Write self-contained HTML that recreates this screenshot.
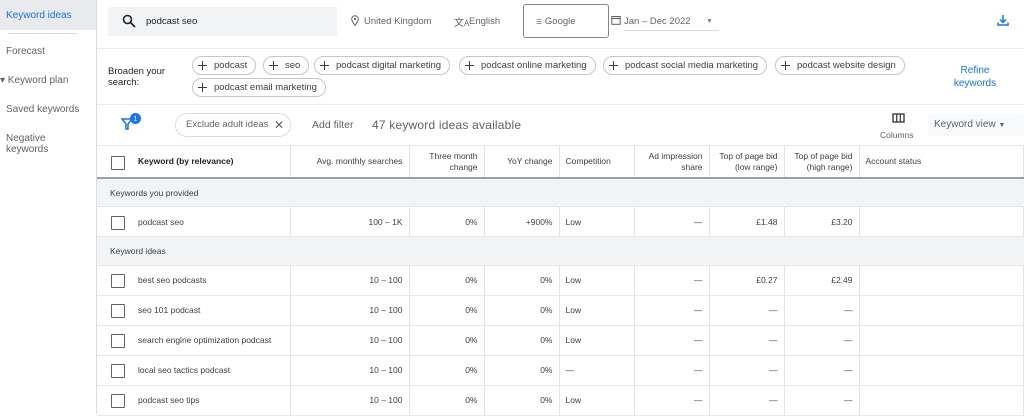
<!DOCTYPE html>
<html><head><meta charset="utf-8"><style>
*{box-sizing:border-box;margin:0;padding:0}
body{width:1024px;height:414px;overflow:hidden;background:#fff;font-family:"Liberation Sans",Arial,sans-serif;color:#3c4043;position:relative}
.a{position:absolute}
.side{left:0;top:0;width:97px;height:414px;border-right:1px solid #dadce0;background:#fff}
.side div{position:absolute;left:6px;font-size:10px;color:#5f6368}
.chip{position:absolute;height:19px;border:1px solid #c4c7c5;border-radius:10px;font-size:9.5px;color:#3c4043;line-height:17px;padding:0 8px 0 21px;white-space:nowrap}
.chip i{position:absolute;left:5px;top:4px;width:9px;height:9px}
.chip i:before{content:"";position:absolute;left:0;top:4px;width:9px;height:1.3px;background:#3c4043}
.chip i:after{content:"";position:absolute;left:4px;top:0;width:1.3px;height:9px;background:#3c4043}
table{position:absolute;left:97px;top:146px;border-collapse:collapse;table-layout:fixed;width:927px;font-size:8.5px;color:#3c4043}
td{border-right:1px solid #e3e3e3;border-bottom:1px solid #e8e8e8;height:30px;padding:0 6px;text-align:right;white-space:nowrap}
td:first-child{text-align:left;padding-left:41px;position:relative}
td:first-child:before{content:"";position:absolute;left:14px;top:50%;margin-top:-6px;width:12px;height:12px;border:1.5px solid #5f6368;border-radius:1px}
tr.h td{height:32px;border-bottom:2px solid #9aa0a6;line-height:11px}
tr.g td{background:#f1f3f4;border-right:none;height:28.5px;text-align:left;padding-left:13px}
tr.g td:before{display:none}
td.l{text-align:left}
</style></head><body>
<div class="a side">
<div style="left:0;top:0;width:96px;height:30px;background:#e8eaed"></div>
<div style="top:10px;color:#1a73e8;font-size:10px">Keyword ideas</div>
<div style="left:8px;top:33px;width:70px;height:1px;background:#dadce0"></div>
<div style="top:46px">Forecast</div>
<div style="top:75px;left:0">▾ Keyword plan</div>
<div style="top:104px">Saved keywords</div>
<div style="top:133px;line-height:11px">Negative<br>keywords</div>
</div>
<div class="a" style="left:108px;top:7px;width:229px;height:29px;background:#f1f3f4"></div>
<svg class="a" style="left:122px;top:14px" width="14" height="14" viewBox="0 0 14 14"><circle cx="5.5" cy="5.5" r="4" fill="none" stroke="#202124" stroke-width="1.6"/><path d="M8.5 8.5L13 13" stroke="#202124" stroke-width="1.8"/></svg>
<div class="a" style="left:146px;top:16px;font-size:9.5px;color:#202124">podcast seo</div>
<svg class="a" style="left:351px;top:15px" width="8" height="11" viewBox="0 0 8 11"><path d="M4 10.5C2 7.5 0.7 5.8 0.7 4A3.3 3.3 0 0 1 7.3 4C7.3 5.8 6 7.5 4 10.5Z" fill="none" stroke="#5f6368" stroke-width="1"/><circle cx="4" cy="4" r="1.1" fill="#5f6368"/></svg>
<div class="a" style="left:364px;top:16px;font-size:9.5px;color:#5f6368">United Kingdom</div>
<div class="a" style="left:454px;top:14px;font-size:10px;color:#5f6368">文<span style="font-size:8px">A</span></div>
<div class="a" style="left:469px;top:16px;font-size:9.5px;color:#5f6368">English</div>
<div class="a" style="left:523px;top:4px;width:86px;height:34px;border:1px solid #80868b;border-radius:3px"></div>
<div class="a" style="left:536px;top:16px;font-size:9.5px;color:#5f6368"><span style="font-size:7px">☰</span> Google</div>
<svg class="a" style="left:611px;top:15px" width="10" height="10" viewBox="0 0 10 10"><rect x="0.8" y="1.5" width="8.4" height="7.8" fill="none" stroke="#5f6368"/><path d="M0.8 3.5H9.2" stroke="#5f6368" stroke-width="1.2"/></svg>
<div class="a" style="left:624px;top:16px;font-size:9.5px;color:#5f6368">Jan – Dec 2022</div>
<div class="a" style="left:706px;top:18px;font-size:7px;color:#80868b">▼</div>
<div class="a" style="left:624px;top:30px;width:95px;height:1px;background:#dadce0"></div>
<svg class="a" style="left:997px;top:14px" width="12" height="12" viewBox="0 0 12 12"><path d="M6 1V8M3 5.5L6 8.5 9 5.5M1 8.5V11H11V8.5" fill="none" stroke="#1a73e8" stroke-width="1.5"/></svg>
<div class="a" style="left:97px;top:48px;width:927px;height:1px;background:#e8eaed"></div>
<div class="a" style="left:108px;top:66px;font-size:9.5px;color:#202124;line-height:11px">Broaden your<br>search:</div>
<div class="chip" style="left:192px;top:56px"><i></i>podcast</div>
<div class="chip" style="left:263px;top:56px"><i></i>seo</div>
<div class="chip" style="left:314px;top:56px"><i></i>podcast digital marketing</div>
<div class="chip" style="left:459px;top:56px"><i></i>podcast online marketing</div>
<div class="chip" style="left:603px;top:56px"><i></i>podcast social media marketing</div>
<div class="chip" style="left:775px;top:56px"><i></i>podcast website design</div>
<div class="chip" style="left:192px;top:78px"><i></i>podcast email marketing</div>
<div class="a" style="left:945px;top:64px;font-size:10px;color:#1a73e8;text-align:center;line-height:13px;width:60px">Refine<br>keywords</div>
<div class="a" style="left:97px;top:104px;width:927px;height:1px;background:#e8eaed"></div>
<svg class="a" style="left:121px;top:117px" width="12" height="13" viewBox="0 0 12 13"><path d="M1 2H11L7 7V12H5V7Z" fill="none" stroke="#1a73e8" stroke-width="1.5"/></svg>
<div class="a" style="left:130px;top:113px;width:11px;height:11px;border-radius:50%;background:#1a73e8;color:#fff;font-size:7.5px;text-align:center;line-height:11px">1</div>
<div class="a" style="left:175px;top:113px;width:116px;height:24px;border:1px solid #dadce0;border-radius:12px;font-size:9.5px;color:#5f6368;line-height:22px;padding-left:10px">Exclude adult ideas <span style="position:absolute;left:98px;font-size:12px;color:#5f6368">✕</span></div>
<div class="a" style="left:312px;top:119px;font-size:10.5px;color:#5f6368">Add filter</div>
<div class="a" style="left:372px;top:118px;font-size:12px;color:#5f6368;letter-spacing:0.2px">47 keyword ideas available</div>
<svg class="a" style="left:892px;top:113px" width="13" height="10" viewBox="0 0 13 10"><rect x="1" y="1" width="11" height="8" fill="none" stroke="#3c4043" stroke-width="1.4"/><path d="M4.7 1V9M8.3 1V9" stroke="#3c4043" stroke-width="1.3"/></svg>
<div class="a" style="left:880px;top:130px;font-size:8.5px;color:#5f6368">Columns</div>
<div class="a" style="left:928px;top:114px;width:96px;height:22px;background:#f8f9fa;border-radius:3px;font-size:10px;color:#5f6368;line-height:22px;padding-left:6px">Keyword view <span style="font-size:7px">▼</span></div>
<div class="a" style="left:97px;top:145px;width:927px;height:1px;background:#e8eaed"></div>
<table>
<colgroup><col style="width:193px"><col style="width:119px"><col style="width:75px"><col style="width:75px"><col style="width:75px"><col style="width:75px"><col style="width:75px"><col style="width:75px"><col></colgroup>
<tr class="h"><td style="font-weight:bold;color:#202124">Keyword (by relevance)</td><td>Avg. monthly searches</td><td>Three month<br>change</td><td>YoY change</td><td class="l">Competition</td><td>Ad impression<br>share</td><td>Top of page bid<br>(low range)</td><td>Top of page bid<br>(high range)</td><td class="l">Account status</td></tr>
<tr class="g"><td colspan="9">Keywords you provided</td></tr>
<tr><td>podcast seo</td><td>100 – 1K</td><td>0%</td><td>+900%</td><td class="l">Low</td><td>—</td><td>£1.48</td><td>£3.20</td><td></td></tr>
<tr class="g"><td colspan="9">Keyword ideas</td></tr>
<tr><td>best seo podcasts</td><td>10 – 100</td><td>0%</td><td>0%</td><td class="l">Low</td><td>—</td><td>£0.27</td><td>£2.49</td><td></td></tr>
<tr><td>seo 101 podcast</td><td>10 – 100</td><td>0%</td><td>0%</td><td class="l">Low</td><td>—</td><td>—</td><td>—</td><td></td></tr>
<tr><td>search engine optimization podcast</td><td>10 – 100</td><td>0%</td><td>0%</td><td class="l">Low</td><td>—</td><td>—</td><td>—</td><td></td></tr>
<tr><td>local seo tactics podcast</td><td>10 – 100</td><td>0%</td><td>0%</td><td class="l">—</td><td>—</td><td>—</td><td>—</td><td></td></tr>
<tr><td>podcast seo tips</td><td>10 – 100</td><td>0%</td><td>0%</td><td class="l">Low</td><td>—</td><td>—</td><td>—</td><td></td></tr>
</table>
</body></html>
